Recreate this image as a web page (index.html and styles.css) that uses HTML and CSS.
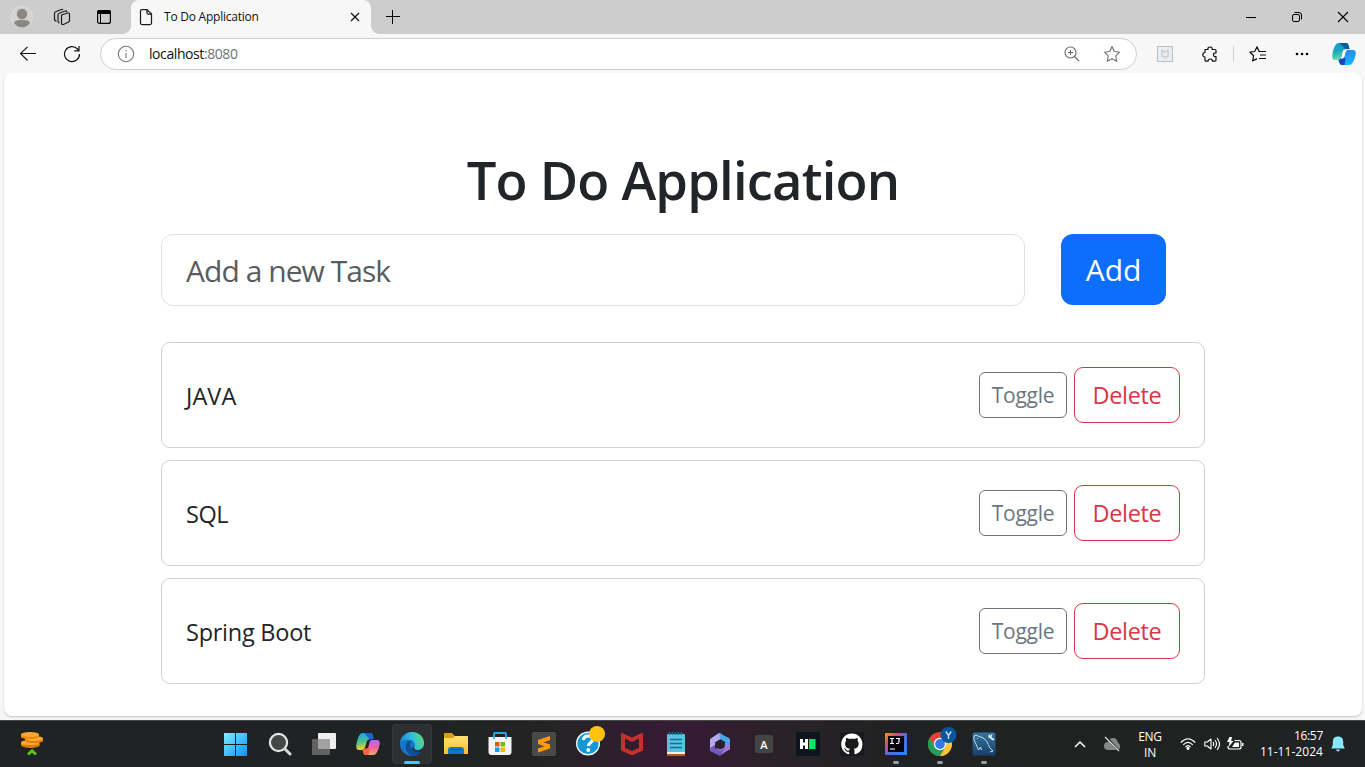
FILE: index.html
```html
<!DOCTYPE html>
<html lang="en">
<head>
<meta charset="utf-8">
<title>To Do Application</title>
<link rel="stylesheet" href="styles.css">
</head>
<body>
<div class="tabbar">
  <svg class="avatar" width="22" height="22" viewBox="0 0 22 22"><circle cx="11" cy="11" r="10.5" fill="#d5d1cc" stroke="#e2dfdb"/><circle cx="11" cy="8" r="5.2" fill="#8b8784"/><path d="M3 17c1-3 4-3 8-3s7 0 8 3c-2 3-5 4.500-8 4.500s-6-1.500-8-4.500z" fill="#8b8784"/></svg>
  <svg class="spaces" width="18" height="18" viewBox="0 0 18 18" fill="none" stroke="#1b1b1b" stroke-width="1.200"><path d="M8.500 7l6-2q2-.5 2 1.500v6q0 1-1 1.500l-5 2.500q-2 .5-2-1.500z"/><path d="M6.500 15q-1.500 0-1.500-2V7q0-1.500 1.500-2l6-2q1-.3 1.500 1"/><path d="M3.500 13Q1.500 13 1.500 11V5.500Q1.500 4 3 3.500l5.500-2q1-.3 1.500.5"/></svg>
  <svg class="panes" width="16" height="16" viewBox="0 0 16 16"><rect x="1.600" y="1.600" width="12.800" height="12.800" rx="2" fill="none" stroke="#000" stroke-width="1.200"/><path d="M1 5V3q0-2 2-2h10q2 0 2 2v2z"/><path d="M4.500 5v9" stroke="#000"/></svg>
  <div class="tab">
    <svg width="14" height="18" viewBox="0 0 14 18" fill="none" stroke="#1b1b1b" stroke-width="1.250"><path d="M1.500 3Q1.500 1.500 3 1.500H8L12.500 6v9q0 1.500-1.500 1.500H3Q1.500 16.500 1.500 15z"/><path d="M8 1.500V5q0 1.200 1 1.200h3.500"/></svg>
    <span class="tab-title">To Do Application</span>
    <svg width="10" height="10" viewBox="0 0 10 10" stroke="#111" stroke-width="1.200"><path d="M1 1l8 8M9 1L1 9"/></svg>
  </div>
  <svg class="newtab" width="14" height="14" viewBox="0 0 14 14" stroke="#000" stroke-width="1"><path d="M6.500 0v14M0 6.500h14"/></svg>
  <div class="winctl">
    <svg width="12" height="12" viewBox="0 0 12 12"><path d="M1 6.500h10" stroke="#000"/></svg>
    <svg width="12" height="12" viewBox="0 0 12 12" fill="none" stroke="#000"><rect x="1.500" y="3.500" width="7" height="7" rx="1.500"/><path d="M3.500 1.500H8q2.500 0 2.500 2.500v4.500"/></svg>
    <svg width="12" height="12" viewBox="0 0 12 12" stroke="#000" stroke-width="1.100"><path d="M1 1l10 10M11 1L1 11"/></svg>
  </div>
</div>

<div class="toolbar">
  <svg class="back" width="18" height="16" viewBox="0 0 18 16" fill="none" stroke="#111" stroke-width="1.100"><path d="M17 7.500H1.500M8.500.8L1.500 7.500l7 7"/></svg>
  <svg class="reload" width="18" height="18" viewBox="0 0 18 18" fill="none" stroke="#111" stroke-width="1.200"><path d="M16.500 9A7.500 7.500 0 1 1 14.500 4l1.500 1.700M16 1v4.800h-4.800"/></svg>
  <div class="address">
    <svg width="18" height="18" viewBox="0 0 18 18" fill="none" stroke="#777" stroke-width="1.100"><circle cx="9" cy="9" r="7.700"/><path d="M9 8v5M9 5v1.500"/></svg>
    <span class="url">localhost<span class="port">:8080</span></span>
    <svg class="zoom" width="16" height="16" viewBox="0 0 16 16" fill="none" stroke="#666" stroke-width="1.100"><circle cx="6.500" cy="6.500" r="5.500"/><path d="M10.500 10.500L15 15M6.500 4v5M4 6.500h5"/></svg>
    <svg class="fav" width="18" height="18" viewBox="0 0 18 18" fill="none" stroke="#707070" stroke-width="1.100" stroke-linejoin="round"><path d="M9 1.500l2.300 5 5.300.7-3.900 3.700 1 5.400L9 13.700l-4.700 2.600 1-5.400L1.400 7.200l5.300-.7z"/></svg>
  </div>
  <svg class="shield" width="16" height="16" viewBox="0 0 16 16" fill="none"><rect x=".5" y=".5" width="15" height="15" fill="#e9edef" stroke="#b7c0c6"/><path d="M5 4.500l3 1.500 3-1.500v5.500l-3 1.500-3-1.500z" stroke="#c5cacc" stroke-width="1.300"/></svg>
  <svg class="puzzle" width="17" height="17" viewBox="0 0 17 17" fill="none" stroke="#111" stroke-width="1.200" stroke-linejoin="round"><path d="M3 3.500H6Q5.500 1 8 1t2.200 2.500H13q1 0 1 1V7q-2.500-.3-2.500 1.800T14 10.500V14q0 1.200-1 1.200H10.500Q10.500 13 8.300 13T6 15.200H4q-1 0-1-1V11Q.8 11 .8 8.800T3 6.500z"/></svg>
  <div class="divider"></div>
  <svg class="favs" width="18" height="18" viewBox="0 0 18 18" fill="none" stroke="#111" stroke-width="1.200" stroke-linejoin="round"><path d="M10 6.300L8 1.800 5.700 6.500l-4.700.7 3.600 3.500-.9 5.200L8 13.600M9.500 6.500H17M11 10h6M10 13.500h7"/></svg>
  <svg class="dots" width="14" height="4" viewBox="0 0 14 4"><circle cx="2" cy="2" r="1.300"/><circle cx="7" cy="2" r="1.300"/><circle cx="12" cy="2" r="1.300"/></svg>
  <svg class="copilot" width="24" height="24" viewBox="0 0 24 24"><defs><linearGradient id="c1" x2=".2" y2="1"><stop stop-color="#129ed8"/><stop offset=".5" stop-color="#1ba5bb"/><stop offset="1" stop-color="#62dfa8"/></linearGradient><linearGradient id="c2" x2=".2" y2="1"><stop stop-color="#2c82f0"/><stop offset="1" stop-color="#14b5f8"/></linearGradient></defs><path d="M7 1h7q2 0 2.500 2l1 4-4 .2q-2 .2-2.600 2.300L9 15q-.8 3-3 3H3q-3 0-2.800-4Q1 7 3.500 3 4.500 1 7 1z" fill="url(#c1)"/><path d="M7 1h7q2 0 2.500 2l1 4h-4z" fill="#075c98"/><path d="M17 23h-7q-2 0-2.500-2l-1-3q2-.3 2.600-2.500l.8-2.800 1.500-3q1-1.700 3-1.700H21q3 0 2.800 4-.8 5-3.300 9-1 2-3.500 2z" fill="url(#c2)"/><path d="M6.500 18q2-.3 2.600-2.500l.8-3 3.600 4.500-1 6H10q-2 0-2.500-2z" fill="#1747b8"/><path d="M11.500 8h3.800q-1.300.5-1.800 2.500l-1 4q-.4 1.500-1.500 2H8.800z" fill="#fff"/></svg>
</div>

<main class="page">
  <div class="container">
    <h1 class="heading">To Do Application</h1>
    <form class="add-form">
      <input class="task-input" type="text" placeholder="Add a new Task">
      <button class="btn-add" type="button">Add</button>
    </form>
    <div class="tasks">
      <div class="card"><span class="task java">JAVA</span><button class="btn toggle">Toggle</button><button class="btn delete">Delete</button></div>
      <div class="card"><span class="task sql">SQL</span><button class="btn toggle">Toggle</button><button class="btn delete">Delete</button></div>
      <div class="card"><span class="task">Spring Boot</span><button class="btn toggle">Toggle</button><button class="btn delete">Delete</button></div>
    </div>
  </div>
</main>

<footer class="taskbar">
  <svg class="widget" width="24" height="26" viewBox="0 0 24 26"><ellipse cx="10.500" cy="14" rx="9.500" ry="3" fill="#dd7a0a"/><rect x="1" y="11" width="18" height="3" fill="#ef8b12"/><ellipse cx="10.500" cy="11.500" rx="9.500" ry="2.600" fill="#ffad35"/><path d="M5 7h18v3q-1 2-9 2t-9-2z" fill="#e67e0c"/><ellipse cx="14" cy="7.500" rx="9" ry="2.500" fill="#ffae36"/><path d="M1 3h18v3q-1 2-9 2T1 6z" fill="#ee8910"/><ellipse cx="10" cy="3.500" rx="9" ry="2.600" fill="#ffa82c"/><path d="M8 23.500l4-3.800 4 3.800" fill="none" stroke="#62bd14" stroke-width="3"/></svg>
  <div class="apps">
    <div class="app"><svg width="24" height="24" viewBox="0 0 24 24"><defs><linearGradient id="w" x2="1" y2="1"><stop stop-color="#7defff"/><stop offset="1" stop-color="#0a92ff"/></linearGradient></defs><path fill="url(#w)" d="M0 1h11v11H0zM12 1h11v11H12zM0 13h11v11H0zM12 13h11v11H12z"/></svg></div>
    <div class="app"><svg width="24" height="24" viewBox="0 0 24 24"><circle cx="10.500" cy="10.500" r="8.600" fill="#444847" stroke="#e7e7e9" stroke-width="2.200"/><path d="M17 17l5 5" stroke="#d6d6da" stroke-width="3" stroke-linecap="round"/></svg></div>
    <div class="app"><svg width="24" height="24" viewBox="0 0 24 24"><rect x="6" y="1" width="18" height="16" rx="1" fill="#efefef"/><rect x="0" y="7" width="18" height="16" rx="1" fill="#666" fill-opacity=".95"/><path d="M6 7h12v10H6z" fill="#a2a2a2"/></svg></div>
    <div class="app"><svg width="24" height="24" viewBox="0 0 24 24"><defs><linearGradient id="p1" x2=".2" y2="1"><stop stop-color="#249df5"/><stop offset=".5" stop-color="#3abe93"/><stop offset="1" stop-color="#f5d42a"/></linearGradient><linearGradient id="p2" x2="0" y2="1"><stop stop-color="#b36bf0"/><stop offset=".5" stop-color="#ef60a4"/><stop offset="1" stop-color="#ffa75c"/></linearGradient></defs><path d="M7 1h7q2 0 2.500 2l1 4-4 .2q-2 .2-2.600 2.300L9 15q-.8 3-3 3H3q-3 0-2.800-4Q1 7 3.500 3 4.500 1 7 1z" fill="url(#p1)"/><path d="M8 1h6q2 0 2.500 2l1 4h-4z" fill="#1961db"/><path d="M17 23h-7q-2 0-2.500-2l-1-3q2-.3 2.600-2.500l.8-2.800 1.500-3q1-1.700 3-1.700H21q3 0 2.800 4-.8 5-3.300 9-1 2-3.500 2z" fill="url(#p2)"/><path d="M6.500 18q2-.3 2.600-2.500l.8-3 3.600 4.500-1 6H10q-2 0-2.500-2z" fill="#f36641"/><path d="M11.500 8h3.800q-1.300.5-1.800 2.500l-1 4q-.4 1.500-1.500 2H8.800z" fill="#202323"/></svg></div>
    <div class="app active"><svg width="24" height="24" viewBox="0 0 24 24"><defs><linearGradient id="e" y1=".2" x2="1"><stop stop-color="#168edb"/><stop offset=".5" stop-color="#2fc3dc"/><stop offset="1" stop-color="#68dc57"/></linearGradient></defs><circle cx="12" cy="12" r="12" fill="#1475c9"/><path d="M0 11C1 4 6 0 12 0c7 0 12 5 12 11 0 4-3 7-7 7-3 0-4-1-3-2 2-2 1-7-3-8-5-1-10 0-11 3z" fill="url(#e)"/><path d="M8 9c-4 4-3 12 4 15 5 0 8-3 10-6-4 2-9 1-11-2-1.500-2-1-5 0-7z" fill="#0d4d93"/><path d="M14.500 16q-1 1 1.500 2 4 .8 7-2l1 1-1.500 2.500-2 .5q-4 1-7-1.500-2-2-1-4z" fill="#2d3030"/></svg><i class="run current"></i></div>
    <div class="app"><svg width="24" height="24" viewBox="0 0 24 24"><defs><linearGradient id="f" x2="0" y2="1"><stop stop-color="#ffe173"/><stop offset="1" stop-color="#f7bd32"/></linearGradient></defs><path d="M0 2q0-1 1-1h7l3 3h12q1 0 1 1v8H0z" fill="#d99d13"/><path d="M0 6h9l2-2h12q1 0 1 1v17H0z" fill="url(#f)"/><path d="M4 22v-4q0-3 3-3h10q3 0 3 3v4z" fill="#1176cc"/><path d="M7 17.500h10" stroke="#0a559f"/></svg></div>
    <div class="app"><svg width="24" height="24" viewBox="0 0 24 24"><path d="M6 7V2q0-1 1-1h10q1 0 1 1v5" fill="none" stroke="#27a9e9" stroke-width="1.800"/><path d="M.5 5h23v15q0 3-3 3h-17q-3 0-3-3z" fill="#f4f4f6"/><path d="M6 5v2M18 5v2" stroke="#27a9e9" stroke-width="1.600"/><path fill="#f05123" d="M7 10h4.500v4.500H7z"/><path fill="#79b816" d="M12.500 10H17v4.500h-4.500z"/><path fill="#0ca4ee" d="M7 15.500h4.500V20H7z"/><path fill="#fbb70c" d="M12.500 15.500H17V20h-4.500z"/></svg></div>
    <div class="app"><svg width="24" height="24" viewBox="0 0 24 24"><rect width="24" height="24" rx="2" fill="#4a4a4a"/><path d="M6 8l12-4v4l-6.500 2.300L18 12.500v4L6 20.500v-4l6.500-2.200L6 12z" fill="#ff9b0b"/></svg></div>
    <div class="app"><svg class="help" width="30" height="30" viewBox="0 0 30 30"><circle cx="12" cy="17.500" r="12" fill="#f3fafc"/><circle cx="12" cy="17.500" r="10.600" fill="#1198d5"/><path d="M7.500 14q0-4 4.500-4t4.500 3.500c0 3-4 3-4 6.500" fill="none" stroke="#fff" stroke-width="3"/><circle cx="12.300" cy="24" r="1.900" fill="#fff"/><circle cx="21" cy="8" r="8" fill="#ffc20d"/></svg></div>
    <div class="app"><svg width="24" height="24" viewBox="0 0 24 24"><path d="M1 .5l11 5 11-5V18.500l-11 5-11-5zM5 6.500v9.300l7 3.200 7-3.200V6.500l-7 3.500z" fill="#c6302c" fill-rule="evenodd"/></svg></div>
    <div class="app"><svg width="24" height="24" viewBox="0 0 24 24"><rect x="3" y="2" width="18" height="20" rx="1" fill="#58c3df"/><path d="M3 20h18v4H3z" fill="#b35a16"/><path d="M3 20h18v2H3z" fill="#f5f0e6"/><path d="M6 7.500h12M6 11.500h12M6 15.500h12" stroke="#116e90" stroke-width="1.500"/><path d="M5.500 0v3M8.500 0v3M11.500 0v3M14.500 0v3M17.500 0v3" stroke="#1a7598" stroke-width="1.500"/></svg></div>
    <div class="app"><svg width="24" height="24" viewBox="0 0 24 24"><path d="M11 1l3 1-1 5-6 4v7l-3 2-2-2V7z" fill="#b6a7ec"/><path d="M11 1l10 5q1 .5 1 2v10l-5-3V10l-5-3z" fill="#48a6ea"/><path d="M22 12v5l-9 6q-1 .5-2 0l-8-4 14-6z" fill="#a17bda"/><path d="M2 16l5-3v3l5 3 5-3-4 7-2 .5-8-4z" fill="#7058bd"/><path d="M12 7.500l4.500 2.500v5.500L12 17.500 7.500 15v-5z" fill="#28202d"/></svg></div>
    <div class="app"><div class="keya">A</div></div>
    <div class="app"><svg width="24" height="24" viewBox="0 0 24 24"><path fill="#0d151e" d="M0 0h24v24H0z"/><path d="M5.500 7v10M10.500 7v10M6 12h4" stroke="#fff" stroke-width="3"/><path fill="#07e765" d="M13 7h6.500v10H13z"/></svg></div>
    <div class="app"><svg width="24" height="24" viewBox="0 0 24 24"><path fill="#191a1c" d="M0 0h24v24H0z"/><path transform="translate(1.200 1.500) scale(1.330)" fill="#fff" d="M8 0C3.580 0 0 3.580 0 8c0 3.540 2.290 6.530 5.470 7.590.4.070.55-.17.55-.38 0-.19-.01-.82-.01-1.490-2.010.37-2.530-.49-2.690-.94-.09-.23-.48-.94-.82-1.130-.28-.15-.68-.52-.01-.53.63-.01 1.080.58 1.230.82.72 1.210 1.870.87 2.330.66.070-.52.28-.87.510-1.070-1.780-.2-3.640-.89-3.640-3.950 0-.87.310-1.590.82-2.150-.08-.2-.36-1.020.08-2.120 0 0 .67-.21 2.200.82.640-.18 1.320-.27 2-.27s1.360.09 2 .27c1.530-1.040 2.200-.82 2.200-.82.440 1.100.16 1.920.08 2.120.510.560.82 1.270.82 2.150 0 3.070-1.870 3.750-3.650 3.950.290.250.540.730.540 1.480 0 1.070-.01 1.930-.01 2.200 0 .21.150.46.550.38A8.010 8.010 0 0 0 16 8c0-4.420-3.580-8-8-8z"/></svg></div>
    <div class="app"><svg width="24" height="24" viewBox="0 0 24 24"><defs><linearGradient id="ij" x2="1" y2="1"><stop offset=".1" stop-color="#ff7d29"/><stop offset=".25" stop-color="#f04472"/><stop offset=".5" stop-color="#576dcb"/><stop offset="1" stop-color="#168cff"/></linearGradient></defs><path fill="url(#ij)" d="M1 1h22v22H1z"/><path fill="#080511" d="M4 4h16v16H4z"/><path d="M6 6.500h4M8 6.500v5M6 11.500h4M12 6.500h4M15 6.500V10q0 1.500-1.500 1.500H12M6 17h5" stroke="#fff" stroke-width="1.200" fill="none"/></svg><i class="run"></i></div>
    <div class="app"><svg class="chrome" width="30" height="29" viewBox="0 0 30 29"><circle cx="12" cy="17" r="12" fill="#e34335"/><path d="M1.600 11L7 20l5 9A12 12 0 0 1 1.600 11z" fill="#20a05a"/><path d="M12 17L7 20l5 9 5-9z" fill="#20a05a"/><path d="M12 11h10.400A12 12 0 0 1 12 29l5.500-9z" fill="#fcc934"/><circle cx="12" cy="17" r="6.200" fill="#fff"/><circle cx="12" cy="17" r="4.900" fill="#2d7ae8"/><circle cx="20.500" cy="8" r="8" fill="#07559b"/><path d="M17.800 4.500l2.700 4 2.700-4M20.500 8v4" fill="none" stroke="#c9e2f5" stroke-width="1.400"/></svg><i class="run"></i></div>
    <div class="app"><svg width="24" height="24" viewBox="0 0 24 24"><defs><linearGradient id="m" x2="0" y2="1"><stop stop-color="#34759d"/><stop offset="1" stop-color="#15426d"/></linearGradient></defs><rect width="23" height="23" x=".5" y=".5" rx="2" fill="url(#m)"/><path d="M6.500 18L4 12 2 8V4q2-1.500 4 0l5 2c5 3 5 7 7 10l3 3-3 1M6.500 18l2-3 1 3M5 6l1 1" fill="none" stroke="#dce7ef" stroke-width=".9"/><path d="M17 3l2 3 3 2" stroke="#e4edf4" stroke-width="2" fill="none"/><path d="M16 5h3l1-3" stroke="#e4edf4" fill="none"/></svg><i class="run"></i></div>
  </div>
  <div class="tray">
    <svg class="chev" width="12" height="8" viewBox="0 0 12 8" fill="none" stroke="#fff" stroke-width="1.500"><path d="M1 7l5-5 5 5"/></svg>
    <svg class="cloud" width="18" height="16" viewBox="0 0 18 16"><path d="M5 14q-4 0-4-4t4-4q1-4 5-4 4 0 5 5 2 .5 2 4 0 3-3 3z" fill="#858888"/><path d="M3 1l13 14" stroke="#202323" stroke-width="2.400"/><path d="M2 1l14 14" stroke="#dedede" stroke-width="1.200"/></svg>
    <div class="lang"><span>ENG</span><span>IN</span></div>
    <svg class="wifi" width="16" height="14" viewBox="0 0 16 14" fill="none" stroke="#fff" stroke-width="1.200"><path d="M.8 5.500q7.200-7.500 14.400 0M3.200 7.800q4.800-5 9.600 0M5.500 10q2.500-2.700 5 0"/><circle cx="8" cy="11.300" r="1" fill="#fff"/></svg>
    <svg class="volume" width="16" height="14" viewBox="0 0 16 14" fill="none" stroke="#fff" stroke-width="1.100"><path d="M.8 5v4h2.500L7 12V2L3.300 5z" stroke-linejoin="round"/><path d="M9 5q1.500 2 0 4M11 3q3 4 0 8M13 1q5 6 0 12"/></svg>
    <svg class="battery" width="17" height="14" viewBox="0 0 17 14"><path d="M7.500 3.500H12q2 0 2 2V10q0 2-2 2H3q-2 0-2-2V9" fill="none" stroke="#fff" stroke-width="1.200"/><path d="M8 5.500h4v4.500H5zM15 6h1.500v3H15z" fill="#fff"/><path d="M2.500 0L0 5h2.500l-1 5L6.500 4H4.200L5 0z" fill="#fff"/></svg>
    <div class="clock"><span>16:57</span><span class="date">11-11-2024</span></div>
    <svg class="bell" width="14" height="16" viewBox="0 0 14 16" fill="#8be6ff"><path d="M7 .5q5 0 5.200 5V9l1.500 3.500H.3L1.800 9V5.500Q2 .5 7 .5zM5 13.500h4q-.5 2-2 2t-2-2z"/></svg>
  </div>
</footer>
</body>
</html>
```
FILE: styles.css
```css
* { box-sizing: border-box; }
body {
  margin: 0;
  width: 1365px;
  height: 767px;
  overflow: hidden;
  display: flex;
  flex-direction: column;
  background: #f7f7f7;
  font-family: "Open Sans", "Noto Sans", sans-serif;
  color: #212529;
}
svg { display: block; flex: none; }

/* Browser tab strip */
.tabbar { height: 34px; flex: none; display: flex; align-items: center; background: #cdcdcd; padding-left: 11px; }
.spaces { margin-left: 20px; }
.panes { margin-left: 25px; }
.tab {
  width: 240px; height: 34px; margin-left: 19px; padding: 0 11px 0 8px;
  display: flex; align-items: center;
  background: #f7f7f7; border-radius: 8px 8px 0 0; position: relative;
}
.tab::before, .tab::after {
  content: ""; position: absolute; bottom: 0; width: 8px; height: 8px;
}
.tab::before { left: -8px; background: radial-gradient(circle at 0 0, #cdcdcd 7.5px, #f7f7f7 8px); }
.tab::after { right: -8px; background: radial-gradient(circle at 100% 0, #cdcdcd 7.5px, #f7f7f7 8px); }
.tab-title { flex: 1; margin-left: 11px; padding-bottom: 1px; font-size: 12px; letter-spacing: -0.23px; color: #111; white-space: nowrap; }
.newtab { margin-left: 15px; }
.winctl { display: flex; gap: 34px; margin-left: auto; padding-right: 16px; }

/* Address row */
.toolbar { height: 39px; flex: none; display: flex; align-items: center; padding: 1px 9px 0 19px; background: #f7f7f7; }
.reload { margin-left: 26px; }
.address {
  width: 1037px; height: 32px; margin-left: 19px; padding: 0 15px 0 16px;
  display: flex; align-items: center;
  background: #fff; border: 1px solid #cfcfcf; border-radius: 16px;
}
.url { margin-left: 14px; padding-bottom: 1px; font-size: 14px; letter-spacing: -0.42px; color: #111; }
.port { color: #717171; }
.zoom { margin-left: auto; }
.fav { margin-left: 23px; }
.shield { margin-left: 20px; }
.puzzle { margin-left: 29px; }
.divider { width: 1px; height: 16px; margin-left: 14px; background: #cfcfcf; }
.favs { margin-left: 15px; }
.dots { margin-left: 28px; }
.copilot { margin-left: auto; }

/* Page viewport */
.page {
  height: 643px; flex: none; margin: 0 3px 0 4px; padding: 75px 157px 0;
  background: #fff; border-radius: 8px; box-shadow: 0 1px 2px 0 #c4c4c4;
  clip-path: inset(0 -3px -3px -3px);
}
.heading { margin: 0 0 22px; height: 64px; line-height: 64px; font-size: 52.5px; font-weight: 600; text-align: center; letter-spacing: -0.8px; white-space: nowrap; }
.add-form { display: flex; gap: 36px; margin: 0 0 36px; }
.task-input {
  width: 864px; height: 72px; padding: 0 24px; font: 30px "Open Sans", sans-serif;
  letter-spacing: -0.95px; border: 1px solid #dee2e6; border-radius: 12px; outline: 0;
}
.task-input::placeholder { color: #595c5f; opacity: 1; }
.btn-add { width: 105px; height: 71px; padding: 0; border: 0; border-radius: 12px; background: #0d6efd; color: #fff; font: 30px "Open Sans", sans-serif; }
.tasks { display: flex; flex-direction: column; gap: 12px; }
.card { height: 106px; display: flex; align-items: center; padding: 0 24px; border: 1px solid #d0d1d2; border-radius: 9px; }
.task { margin-right: auto; padding-top: 2px; font-size: 23.5px; letter-spacing: -0.25px; }
.java { letter-spacing: 0.1px; }
.sql { letter-spacing: -0.4px; }
.btn { padding: 0; background: #fff; font-family: inherit; }
.toggle { width: 88px; height: 46px; border: 1px solid #6c757d; border-radius: 6px; color: #6c757d; font-size: 21px; letter-spacing: -0.3px; }
.delete { width: 106px; height: 56px; margin-left: 7px; border: 1px solid #dc3545; border-radius: 9px; color: #dc3545; font-size: 23.5px; letter-spacing: -0.35px; }

/* Desktop taskbar */
.taskbar {
  height: 47px; flex: none; margin-top: 4px; display: flex; align-items: center; color: #fff;
  border-top: 1px solid #454747;
  background: linear-gradient(90deg, #202323 0, #202323 430px, #252325 560px, #351b34 660px, #351b34 700px, #292327 780px, #202122 900px, #202323);
}
.widget { margin-left: 20px; }
.apps { display: flex; margin-left: 170px; }
.app { width: 44px; height: 46px; display: flex; align-items: center; justify-content: center; position: relative; }
.app.active::before { content: ""; position: absolute; inset: 3px 2px; border-radius: 4px; background: #2d3030; border: 1px solid #343737; }
.app svg { position: relative; }
.help { margin: -6px -6px 0 0; }
.chrome { margin: -5px -6px 0 0; }
.run { position: absolute; left: 19px; bottom: 3px; width: 6px; height: 3px; border-radius: 2px; background: #9b9d9d; }
.run.current { left: 14px; width: 16px; background: #4cc2ff; }
.keya { width: 18px; height: 18px; border-radius: 2px; background: #444; font: 600 11px/19px "Open Sans", sans-serif; text-align: center; }
.tray { display: flex; align-items: center; margin-left: 68px; font-size: 12px; line-height: 16px; }
.cloud { margin-left: 17px; }
.lang { width: 30px; margin-left: 14px; padding-top: 1px; display: flex; flex-direction: column; align-items: center; letter-spacing: -0.3px; }
.wifi { margin-left: 15px; }
.volume { margin-left: 8px; }
.battery { margin-left: 7px; }
.clock { width: 76px; margin-left: 3px; display: flex; flex-direction: column; align-items: flex-end; letter-spacing: -0.3px; white-space: nowrap; }
.date { letter-spacing: 0.05px; }
.bell { margin-left: 8px; }
```
